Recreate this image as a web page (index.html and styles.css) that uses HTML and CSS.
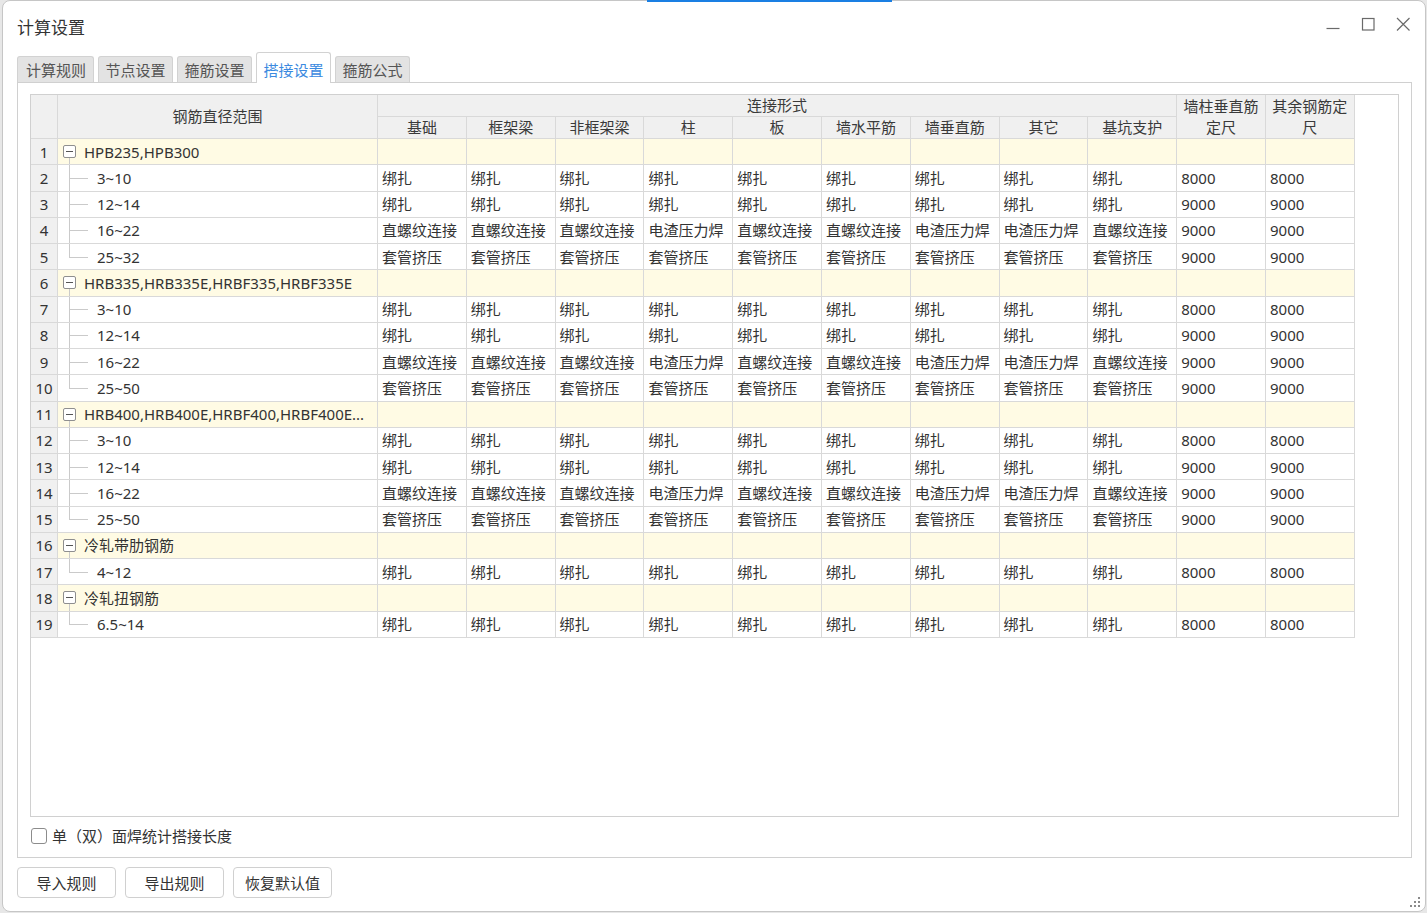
FILE: index.html
```html
<!DOCTYPE html>
<html lang="zh-CN">
<head>
<meta charset="utf-8">
<title>计算设置</title>
<link rel="stylesheet" href="styles.css">
</head>
<body>
<div class="accent"></div>
<div class="window">
  <div class="titlebar">
    <div class="title">计算设置</div>
    <div class="controls">
      <svg class="ctl" width="14" height="14" viewBox="0 0 14 14"><path d="M0.5 11.5H13.5" stroke="#6a6a6a" stroke-width="1.2" fill="none"/></svg>
      <svg class="ctl" width="14" height="14" viewBox="0 0 14 14"><rect x="1.5" y="1.5" width="11.5" height="11.5" stroke="#6a6a6a" stroke-width="1.2" fill="none"/></svg>
      <svg class="ctl" width="14" height="14" viewBox="0 0 14 14"><path d="M1 1L13.5 13.5M13.5 1L1 13.5" stroke="#6a6a6a" stroke-width="1.2" fill="none"/></svg>
    </div>
  </div>
  <div class="content">
    <div class="tabs">
      <div class="tab first">计算规则</div>
      <div class="tab">节点设置</div>
      <div class="tab">箍筋设置</div>
      <div class="tab active">搭接设置</div>
      <div class="tab">箍筋公式</div>
    </div>
    <div class="panel">
      <div class="frame">
        <div class="grid">
          <div class="c h span2"></div>
          <div class="c h span2">钢筋直径范围</div>
          <div class="c h span9">连接形式</div>
          <div class="c h span2">墙柱垂直筋定尺</div>
          <div class="c h span2">其余钢筋定尺</div>
          <div class="c h">基础</div>
          <div class="c h">框架梁</div>
          <div class="c h">非框架梁</div>
          <div class="c h">柱</div>
          <div class="c h">板</div>
          <div class="c h">墙水平筋</div>
          <div class="c h">墙垂直筋</div>
          <div class="c h">其它</div>
          <div class="c h">基坑支护</div>

          <div class="row grp"><div class="c n">1</div><div class="c nm"><span class="tg"><i></i></span>HPB235,HPB300</div><div class="c"></div><div class="c"></div><div class="c"></div><div class="c"></div><div class="c"></div><div class="c"></div><div class="c"></div><div class="c"></div><div class="c"></div><div class="c"></div><div class="c"></div></div>
          <div class="row"><div class="c n">2</div><div class="c nm ch">3~10</div><div class="c">绑扎</div><div class="c">绑扎</div><div class="c">绑扎</div><div class="c">绑扎</div><div class="c">绑扎</div><div class="c">绑扎</div><div class="c">绑扎</div><div class="c">绑扎</div><div class="c">绑扎</div><div class="c">8000</div><div class="c">8000</div></div>
          <div class="row"><div class="c n">3</div><div class="c nm ch">12~14</div><div class="c">绑扎</div><div class="c">绑扎</div><div class="c">绑扎</div><div class="c">绑扎</div><div class="c">绑扎</div><div class="c">绑扎</div><div class="c">绑扎</div><div class="c">绑扎</div><div class="c">绑扎</div><div class="c">9000</div><div class="c">9000</div></div>
          <div class="row"><div class="c n">4</div><div class="c nm ch">16~22</div><div class="c">直螺纹连接</div><div class="c">直螺纹连接</div><div class="c">直螺纹连接</div><div class="c">电渣压力焊</div><div class="c">直螺纹连接</div><div class="c">直螺纹连接</div><div class="c">电渣压力焊</div><div class="c">电渣压力焊</div><div class="c">直螺纹连接</div><div class="c">9000</div><div class="c">9000</div></div>
          <div class="row"><div class="c n">5</div><div class="c nm ch last">25~32</div><div class="c">套管挤压</div><div class="c">套管挤压</div><div class="c">套管挤压</div><div class="c">套管挤压</div><div class="c">套管挤压</div><div class="c">套管挤压</div><div class="c">套管挤压</div><div class="c">套管挤压</div><div class="c">套管挤压</div><div class="c">9000</div><div class="c">9000</div></div>

          <div class="row grp"><div class="c n">6</div><div class="c nm"><span class="tg"><i></i></span>HRB335,HRB335E,HRBF335,HRBF335E</div><div class="c"></div><div class="c"></div><div class="c"></div><div class="c"></div><div class="c"></div><div class="c"></div><div class="c"></div><div class="c"></div><div class="c"></div><div class="c"></div><div class="c"></div></div>
          <div class="row"><div class="c n">7</div><div class="c nm ch">3~10</div><div class="c">绑扎</div><div class="c">绑扎</div><div class="c">绑扎</div><div class="c">绑扎</div><div class="c">绑扎</div><div class="c">绑扎</div><div class="c">绑扎</div><div class="c">绑扎</div><div class="c">绑扎</div><div class="c">8000</div><div class="c">8000</div></div>
          <div class="row"><div class="c n">8</div><div class="c nm ch">12~14</div><div class="c">绑扎</div><div class="c">绑扎</div><div class="c">绑扎</div><div class="c">绑扎</div><div class="c">绑扎</div><div class="c">绑扎</div><div class="c">绑扎</div><div class="c">绑扎</div><div class="c">绑扎</div><div class="c">9000</div><div class="c">9000</div></div>
          <div class="row"><div class="c n">9</div><div class="c nm ch">16~22</div><div class="c">直螺纹连接</div><div class="c">直螺纹连接</div><div class="c">直螺纹连接</div><div class="c">电渣压力焊</div><div class="c">直螺纹连接</div><div class="c">直螺纹连接</div><div class="c">电渣压力焊</div><div class="c">电渣压力焊</div><div class="c">直螺纹连接</div><div class="c">9000</div><div class="c">9000</div></div>
          <div class="row"><div class="c n">10</div><div class="c nm ch last">25~50</div><div class="c">套管挤压</div><div class="c">套管挤压</div><div class="c">套管挤压</div><div class="c">套管挤压</div><div class="c">套管挤压</div><div class="c">套管挤压</div><div class="c">套管挤压</div><div class="c">套管挤压</div><div class="c">套管挤压</div><div class="c">9000</div><div class="c">9000</div></div>

          <div class="row grp"><div class="c n">11</div><div class="c nm"><span class="tg"><i></i></span>HRB400,HRB400E,HRBF400,HRBF400E...</div><div class="c"></div><div class="c"></div><div class="c"></div><div class="c"></div><div class="c"></div><div class="c"></div><div class="c"></div><div class="c"></div><div class="c"></div><div class="c"></div><div class="c"></div></div>
          <div class="row"><div class="c n">12</div><div class="c nm ch">3~10</div><div class="c">绑扎</div><div class="c">绑扎</div><div class="c">绑扎</div><div class="c">绑扎</div><div class="c">绑扎</div><div class="c">绑扎</div><div class="c">绑扎</div><div class="c">绑扎</div><div class="c">绑扎</div><div class="c">8000</div><div class="c">8000</div></div>
          <div class="row"><div class="c n">13</div><div class="c nm ch">12~14</div><div class="c">绑扎</div><div class="c">绑扎</div><div class="c">绑扎</div><div class="c">绑扎</div><div class="c">绑扎</div><div class="c">绑扎</div><div class="c">绑扎</div><div class="c">绑扎</div><div class="c">绑扎</div><div class="c">9000</div><div class="c">9000</div></div>
          <div class="row"><div class="c n">14</div><div class="c nm ch">16~22</div><div class="c">直螺纹连接</div><div class="c">直螺纹连接</div><div class="c">直螺纹连接</div><div class="c">电渣压力焊</div><div class="c">直螺纹连接</div><div class="c">直螺纹连接</div><div class="c">电渣压力焊</div><div class="c">电渣压力焊</div><div class="c">直螺纹连接</div><div class="c">9000</div><div class="c">9000</div></div>
          <div class="row"><div class="c n">15</div><div class="c nm ch last">25~50</div><div class="c">套管挤压</div><div class="c">套管挤压</div><div class="c">套管挤压</div><div class="c">套管挤压</div><div class="c">套管挤压</div><div class="c">套管挤压</div><div class="c">套管挤压</div><div class="c">套管挤压</div><div class="c">套管挤压</div><div class="c">9000</div><div class="c">9000</div></div>

          <div class="row grp"><div class="c n">16</div><div class="c nm"><span class="tg"><i></i></span>冷轧带肋钢筋</div><div class="c"></div><div class="c"></div><div class="c"></div><div class="c"></div><div class="c"></div><div class="c"></div><div class="c"></div><div class="c"></div><div class="c"></div><div class="c"></div><div class="c"></div></div>
          <div class="row"><div class="c n">17</div><div class="c nm ch last">4~12</div><div class="c">绑扎</div><div class="c">绑扎</div><div class="c">绑扎</div><div class="c">绑扎</div><div class="c">绑扎</div><div class="c">绑扎</div><div class="c">绑扎</div><div class="c">绑扎</div><div class="c">绑扎</div><div class="c">8000</div><div class="c">8000</div></div>

          <div class="row grp"><div class="c n">18</div><div class="c nm"><span class="tg"><i></i></span>冷轧扭钢筋</div><div class="c"></div><div class="c"></div><div class="c"></div><div class="c"></div><div class="c"></div><div class="c"></div><div class="c"></div><div class="c"></div><div class="c"></div><div class="c"></div><div class="c"></div></div>
          <div class="row"><div class="c n">19</div><div class="c nm ch last">6.5~14</div><div class="c">绑扎</div><div class="c">绑扎</div><div class="c">绑扎</div><div class="c">绑扎</div><div class="c">绑扎</div><div class="c">绑扎</div><div class="c">绑扎</div><div class="c">绑扎</div><div class="c">绑扎</div><div class="c">8000</div><div class="c">8000</div></div>
        </div>
      </div>
      <label class="opt"><span class="box"></span><span>单（双）面焊统计搭接长度</span></label>
    </div>
    <div class="btns">
      <button class="btn">导入规则</button>
      <button class="btn">导出规则</button>
      <button class="btn">恢复默认值</button>
    </div>
  </div>
  <svg class="grip" width="14" height="12" viewBox="0 0 14 12">
    <rect x="10" y="0" width="2" height="2" fill="#8a8a8a"/>
    <rect x="6" y="4" width="2" height="2" fill="#8a8a8a"/>
    <rect x="10" y="4" width="2" height="2" fill="#8a8a8a"/>
    <rect x="2" y="8" width="2" height="2" fill="#8a8a8a"/>
    <rect x="6" y="8" width="2" height="2" fill="#8a8a8a"/>
    <rect x="10" y="8" width="2" height="2" fill="#8a8a8a"/>
  </svg>
</div>
</body>
</html>
```

FILE: styles.css
```css
* { box-sizing: border-box; }
html, body { margin: 0; padding: 0; }
body {
  width: 1427px;
  height: 913px;
  overflow: hidden;
  background: #e7e7e7;
  font-family: "Noto Sans", "Noto Sans CJK SC", sans-serif;
  font-size: 15px;
  color: #333;
  position: relative;
}
.accent {
  position: absolute;
  left: 647px;
  top: 0;
  width: 245px;
  height: 2px;
  background: #1a7fe3;
  z-index: 5;
}
.window {
  margin: 0 1px 0 2px;
  height: 912px;
  background: #fff;
  border: 1px solid #c6c6c6;
  border-radius: 8px;
  position: relative;
  display: flex;
  flex-direction: column;
}
.titlebar {
  height: 51px;
  display: flex;
  align-items: center;
  justify-content: space-between;
  padding: 0 15px 0 14px;
}
.title {
  font-family: "Noto Sans CJK SC", sans-serif;
  font-size: 17px;
  line-height: 24px;
  color: #333;
}
.controls {
  display: flex;
  align-items: center;
  gap: 21px;
  margin-bottom: 5px;
}
.ctl { display: block; }
.content {
  padding: 0 13px 0 14px;
  display: flex;
  flex-direction: column;
}
.tabs {
  display: flex;
  align-items: flex-end;
  gap: 4px;
  height: 31px;
  margin-bottom: -1px;
}
.tab {
  height: 26px;
  line-height: 25px;
  padding: 0 6.5px;
  border: 1px solid #d2d2d2;
  border-bottom: none;
  border-radius: 3px 3px 0 0;
  background: #e3e3e3;
  color: #555;
  font-family: "Noto Sans CJK SC", sans-serif;
  font-size: 15px;
  margin-bottom: 1px;
}
.tab.first { padding: 0 7px 0 8px; }
.tab.active {
  height: 31px;
  padding-top: 4px;
  background: #fff;
  color: #3b8ae0;
  margin-bottom: 0;
  position: relative;
  z-index: 1;
}
.panel {
  border: 1px solid #d0d0d0;
  padding: 11px 12px 11px;
  display: flex;
  flex-direction: column;
}
.frame {
  height: 723px;
  border: 1px solid #d0d0d0;
  overflow: hidden;
}
.grid {
  display: grid;
  grid-template-columns: 27px 320px repeat(11, 88.8px);
  grid-template-rows: 22px 22px repeat(19, 26.25px);
}
.row { display: contents; }
.c {
  border-right: 1px solid #d9d9d9;
  border-bottom: 1px solid #d9d9d9;
  padding: 0 4px;
  display: flex;
  align-items: center;
  white-space: nowrap;
  overflow: hidden;
  line-height: 20px;
}
.h {
  background: #f0f0f0;
  justify-content: center;
  text-align: center;
  white-space: normal;
  padding: 0 2px;
  line-height: 21px;
  color: #3a3a3a;
}
.span2 { grid-row: span 2; }
.span9 { grid-column: span 9; }
.n {
  background: #f0f0f0;
  justify-content: center;
  padding: 0;
}
.grp > .c { background: #fffbe4; }
.grp > .n { background: #f0f0f0; }
.grp > .nm {
  padding-left: 5px;
  background: linear-gradient(#cacaca, #cacaca) 11px 19px / 1px 100% no-repeat border-box, #fffbe4;
}
.tg {
  width: 13px;
  height: 13px;
  border: 1px solid #8f8f8f;
  border-radius: 2px;
  display: flex;
  align-items: center;
  justify-content: center;
  margin-right: 8px;
  flex: none;
  background: #fff;
}
.tg i {
  display: block;
  width: 7px;
  height: 1px;
  background: #555;
}
.ch {
  padding-left: 39px;
  background:
    linear-gradient(#cacaca, #cacaca) 11px 0 / 1px 100% no-repeat border-box,
    linear-gradient(#cacaca, #cacaca) 11px 50% / 19px 1px no-repeat border-box;
}
.ch.last {
  background:
    linear-gradient(#cacaca, #cacaca) 11px 0 / 1px 50% no-repeat border-box,
    linear-gradient(#cacaca, #cacaca) 11px 50% / 19px 1px no-repeat border-box;
}
.opt {
  margin-top: 9px;
  height: 20px;
  display: flex;
  align-items: center;
  gap: 5px;
  padding-left: 1px;
  line-height: 20px;
}
.box {
  width: 16px;
  height: 16px;
  border: 1px solid #8c8c8c;
  border-radius: 3px;
  background: #fff;
  flex: none;
}
.btns {
  display: flex;
  gap: 9px;
  margin-top: 9px;
}
.btn {
  width: 99px;
  height: 31px;
  border: 1px solid #d0d0d0;
  border-radius: 4px;
  background: #fff;
  color: #333;
  font-family: "Noto Sans CJK SC", sans-serif;
  font-size: 15px;
  padding: 0;
}
.grip {
  position: absolute;
  right: 3px;
  bottom: 2px;
}
```
